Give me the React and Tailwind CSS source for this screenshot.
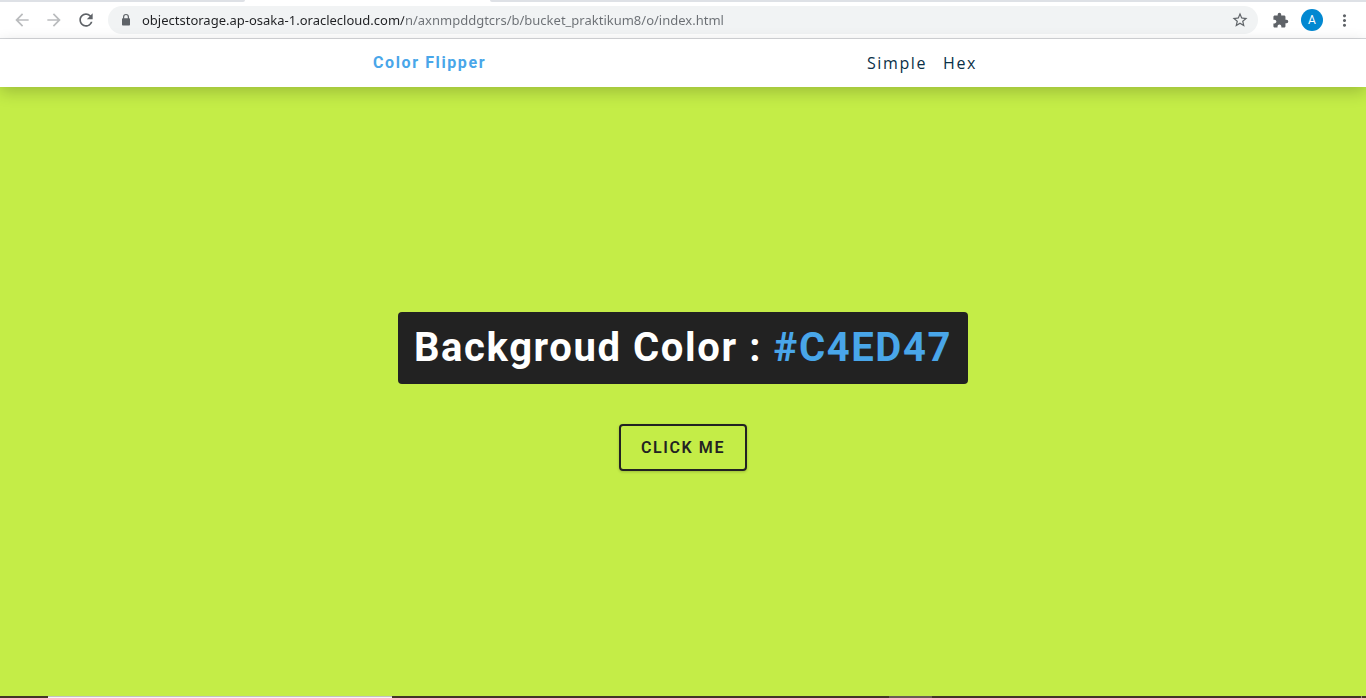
import { useState } from "react";
import {
  MdArrowBack,
  MdArrowForward,
  MdRefresh,
  MdStarBorder,
  MdExtension,
  MdMoreVert,
} from "react-icons/md";

const HEX = "0123456789ABCDEF";

function randomHex() {
  let out = "#";
  for (let i = 0; i < 6; i++) out += HEX[Math.floor(Math.random() * 16)];
  return out;
}

function TabStrip() {
  return (
    <div className="flex h-[2px] shrink-0 bg-white" aria-hidden="true">
      <div className="w-[245px] rounded-br-[2px] bg-[#dee1e6]" />
      <div className="w-[245px] bg-white" />
      <div className="flex-1 rounded-bl-[2px] bg-[#dee1e6]" />
    </div>
  );
}

function LockIcon() {
  return (
    <svg viewBox="0 0 14 14" className="size-[14px] shrink-0" aria-hidden="true">
      <path d="M4.6 6V3.9a2.4 2.4 0 0 1 4.8 0V6" fill="none" stroke="currentColor" strokeWidth="1.2" />
      <rect x="3" y="5.2" width="8" height="7.3" rx="0.8" fill="currentColor" />
    </svg>
  );
}

function ToolButton({ label, className, children }) {
  return (
    <button
      type="button"
      aria-label={label}
      className={`flex h-7 shrink-0 items-center justify-center ${className}`}
    >
      {children}
    </button>
  );
}

function Toolbar() {
  return (
    <div className="flex h-[37px] shrink-0 items-center border-b border-[#d5d7da] bg-white px-[6px] text-[#5f6368]">
      <ToolButton label="Back" className="w-8 text-[#babcbe]">
        <MdArrowBack size={20} />
      </ToolButton>
      <ToolButton label="Forward" className="w-8 text-[#babcbe]">
        <MdArrowForward size={20} />
      </ToolButton>
      <ToolButton label="Reload" className="w-8">
        <MdRefresh size={20} />
      </ToolButton>
      <div className="ml-[6px] flex h-7 flex-1 items-center rounded-full bg-[#f1f3f4] pr-[9px] pl-[11px]">
        <LockIcon />
        <input
          type="text"
          aria-label="Address"
          defaultValue="objectstorage.ap-osaka-1.oraclecloud.com/n/axnmpddgtcrs/b/bucket_praktikum8/o/index.html"
          className="ml-[9px] h-7 min-w-0 flex-1 bg-[linear-gradient(to_right,#202124_262px,#6b6f74_262px)] bg-clip-text font-['Noto_Sans',sans-serif] text-[13px] text-transparent caret-[#202124] outline-none"
        />
        <button type="button" aria-label="Bookmark this page">
          <MdStarBorder size={18} />
        </button>
      </div>
      <ToolButton label="Extensions" className="ml-[6px] w-8">
        <MdExtension size={17} />
      </ToolButton>
      <ToolButton label="Profile" className="w-8">
        <span className="flex size-[22px] items-center justify-center rounded-full bg-[#0288d1] font-['Roboto',sans-serif] text-xs text-white">
          A
        </span>
      </ToolButton>
      <ToolButton label="Menu" className="w-8">
        <MdMoreVert size={19} />
      </ToolButton>
    </div>
  );
}

function Nav() {
  return (
    <nav className="z-10 flex h-12 shrink-0 justify-center bg-white shadow-[0_5px_15px_rgba(0,0,0,0.2)]">
      <div className="flex w-[90vw] max-w-[620px] items-center justify-between">
        <h4 className="font-['Roboto',sans-serif] font-bold text-[#49a6e9]">Color Flipper</h4>
        <ul className="flex gap-4 pr-4 font-['Open_Sans',sans-serif] font-medium text-[#0a3047]">
          <li>
            <a href="#simple">Simple</a>
          </li>
          <li>
            <a href="#hex">Hex</a>
          </li>
        </ul>
      </div>
    </nav>
  );
}

function Taskbar() {
  return (
    <div className="flex h-[2px] shrink-0 bg-[#433428]" aria-hidden="true">
      <div className="ml-12 w-[344px] border-t border-[#c3bfc6] bg-[#f5f4f6]" />
      <div className="flex-1" />
      <div className="mr-[429px] w-[43px] bg-[#6b5d54]" />
      <div className="mr-1 w-px bg-[#9a9089]" />
    </div>
  );
}

export default function App() {
  const [color, setColor] = useState("#C4ED47");
  return (
    <div className="flex min-h-screen flex-col">
      <TabStrip />
      <Toolbar />
      <div className="flex flex-1 flex-col text-base tracking-widest">
        <Nav />
        <main
          className="flex flex-1 flex-col items-center justify-center font-['Roboto',sans-serif]"
          style={{ backgroundColor: color }}
        >
          <h2 className="mb-10 rounded-[4px] bg-[#222222] p-4 text-[40px] leading-10 font-bold text-white">
            Backgroud Color : <span className="text-[#49a6e9]">{color}</span>
          </h2>
          <button
            type="button"
            onClick={() => setColor(randomHex())}
            className="rounded-[4px] border-2 border-[#222222] px-5 py-[10px] leading-[23px] font-semibold text-[#222222] uppercase shadow-[0_1px_3px_rgba(0,0,0,0.2)]"
          >
            Click me
          </button>
        </main>
      </div>
      <Taskbar />
    </div>
  );
}
